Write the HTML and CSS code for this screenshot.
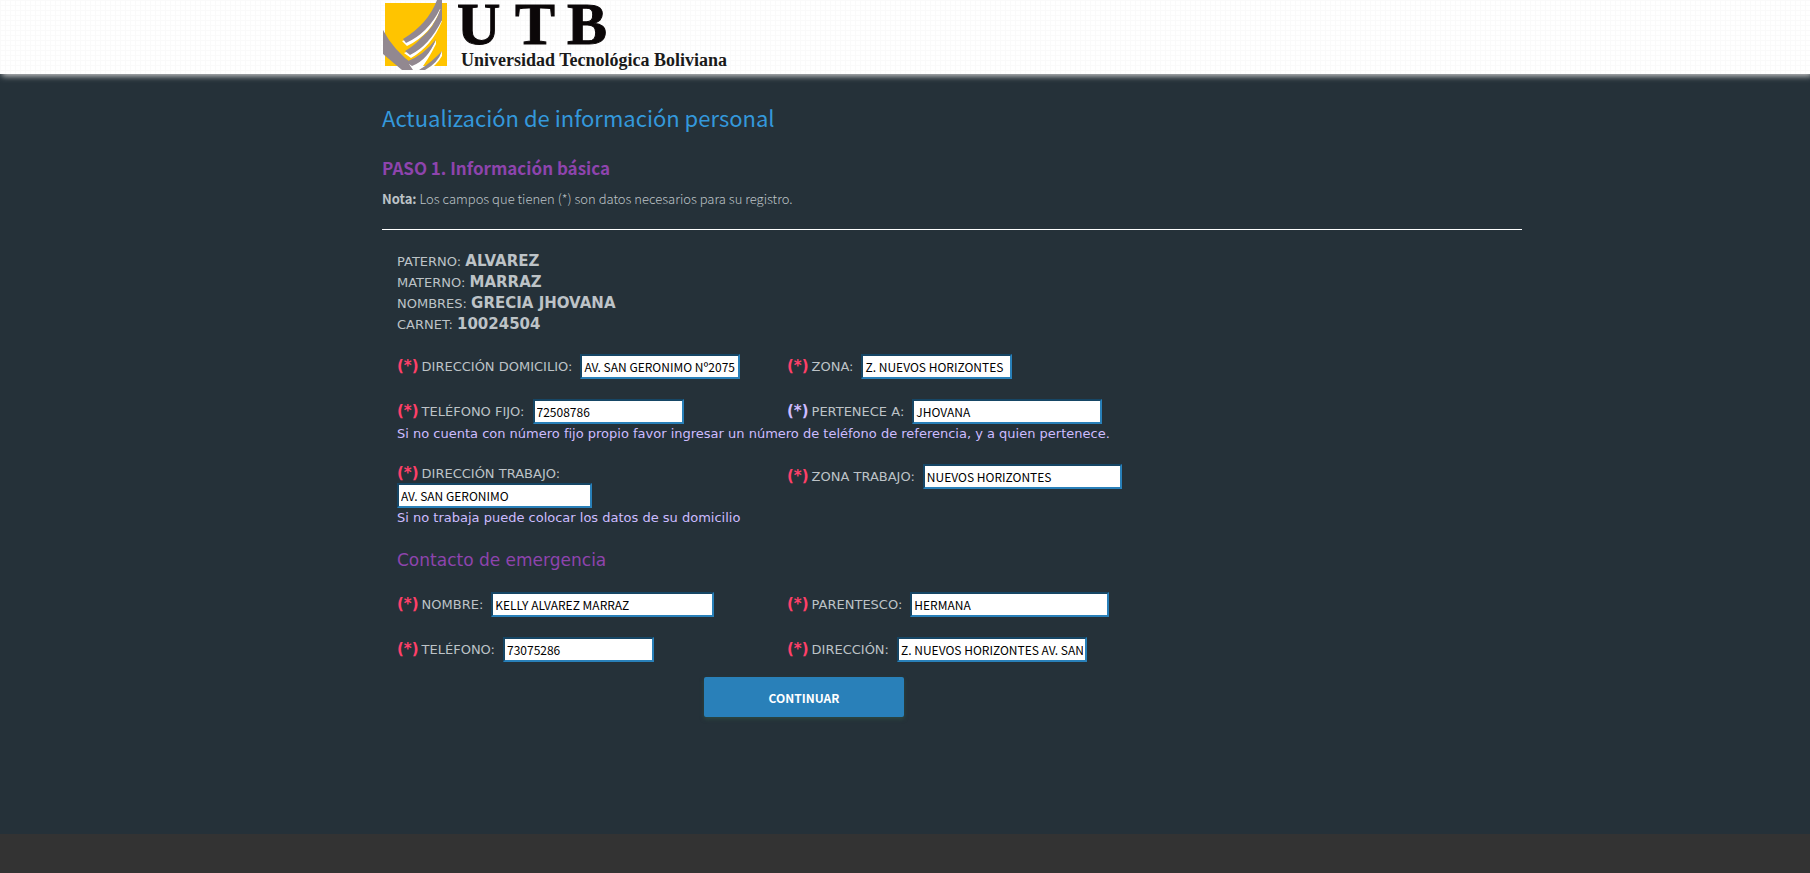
FILE: index.html
```html
<!DOCTYPE html>
<html lang="es">
<head>
    <meta charset="UTF-8">
    <meta name="viewport" content="width=device-width, initial-scale=1.0">
    <title>Actualización de información personal</title>
    <link rel="stylesheet" href="styles.css">
</head>
<body>
    <header class="header">
      <div class="container">
        <svg class="logo" width="350" height="74" viewBox="0 0 350 74" role="img" aria-label="UTB Universidad Tecnológica Boliviana">
          <rect x="3" y="3" width="62" height="63" fill="#ffc400"/>
          <path d="M1 30 Q12 51 32 65 L42 70 L20 70 L1 54 Z" fill="#928890"/>
          <path d="M31 70 L27 64 Q46 58 54 40 L54 44 Q46 60 38 70 Z" fill="#fff"/>
          <path d="M38 70 Q54 62 60 51 L60 56 Q54 66 46 70 Z" fill="#fff"/>
          <path d="M20 41 L25 46 Q50 34 59 8 L55 10 Q42 36 20 41 Z" fill="#fff"/>
          <path d="M22 53 L29 58 Q50 46 60 21 L56 20 Q44 46 22 53 Z" fill="#fff"/>
          <path d="M55 0 Q46 24 21 39 L24 43 Q46 33 58 9 L60 9 L60 0 Z" fill="#928890"/>
          <path d="M60 8 L60 20 Q47 46 28 55 L23 51 Q32 46 39 38 Q52 28 59 8 Z" fill="#928890"/>
          <path d="M54 39 Q42 55 24 62 L30 66 Q46 60 54 39 Z" fill="#928890"/>
          <path d="M60 51 Q50 62 37 70 L43 70 Q56 63 60 51 Z" fill="#928890"/>
          <text class="logo-initials" x="75 133 185" y="44">UTB</text>
          <text class="logo-name" x="79" y="66">Universidad Tecnológica Boliviana</text>
        </svg>
      </div>
    </header>

    <main class="main">
      <div class="container">
        <h1 class="page-title">Actualización de información personal</h1>
        <h2 class="step-title">PASO 1. Información básica</h2>
        <p class="intro"><strong>Nota:</strong> Los campos que tienen (*) son datos necesarios para su registro.</p>
        <hr class="divider">

        <form class="form" id="update-form">
          <!-- Student details -->
          <div class="details">
            <p>PATERNO: <b>ALVAREZ</b></p>
            <p>MATERNO: <b>MARRAZ</b></p>
            <p>NOMBRES: <b>GRECIA JHOVANA</b></p>
            <p>CARNET: <b>10024504</b></p>
          </div>

          <div class="row">
            <div class="field">
              <label for="direccion"><b class="required">(*)</b>DIRECCIÓN DOMICILIO:</label>
              <input type="text" class="w-160" id="direccion" value="AV. SAN GERONIMO Nº2075">
            </div>
            <div class="field">
              <label for="zona"><b class="required">(*)</b>ZONA:</label>
              <input type="text" class="w-150" id="zona" value="Z. NUEVOS HORIZONTES">
            </div>
          </div>

          <div class="row">
            <div class="field">
              <label for="telefono-fijo"><b class="required">(*)</b>TELÉFONO FIJO:</label>
              <input type="text" class="w-150" id="telefono-fijo" value="72508786">
            </div>
            <div class="field">
              <label for="pertenece"><b class="required optional">(*)</b>PERTENECE A:</label>
              <input type="text" class="w-190" id="pertenece" value="JHOVANA">
            </div>
            <p class="hint">Si no cuenta con número fijo propio favor ingresar un número de teléfono de referencia, y a quien pertenece.</p>
          </div>

          <div class="row">
            <div class="field stacked">
              <label for="direccion-trabajo"><b class="required">(*)</b>DIRECCIÓN TRABAJO:</label>
              <input type="text" class="w-195" id="direccion-trabajo" value="AV. SAN GERONIMO">
            </div>
            <div class="field">
              <label for="zona-trabajo"><b class="required">(*)</b>ZONA TRABAJO:</label>
              <input type="text" class="w-200" id="zona-trabajo" value="NUEVOS HORIZONTES">
            </div>
            <p class="hint">Si no trabaja puede colocar los datos de su domicilio</p>
          </div>

          <!-- Emergency contact -->
          <h3 class="section-title">Contacto de emergencia</h3>

          <div class="row">
            <div class="field">
              <label for="nombre"><b class="required">(*)</b>NOMBRE:</label>
              <input type="text" class="w-223" id="nombre" value="KELLY ALVAREZ MARRAZ">
            </div>
            <div class="field">
              <label for="parentesco"><b class="required">(*)</b>PARENTESCO:</label>
              <input type="text" class="w-200" id="parentesco" value="HERMANA">
            </div>
          </div>

          <div class="row">
            <div class="field">
              <label for="telefono"><b class="required">(*)</b>TELÉFONO:</label>
              <input type="text" class="w-150" id="telefono" value="73075286">
            </div>
            <div class="field">
              <label for="direccion-contacto"><b class="required">(*)</b>DIRECCIÓN:</label>
              <input type="text" class="w-190" id="direccion-contacto" value="Z. NUEVOS HORIZONTES AV. SAN GERONIMO">
            </div>
          </div>

          <button type="submit" class="btn">CONTINUAR</button>
        </form>
      </div>
    </main>
</body>
</html>
```

FILE: styles.css
```css
* {
  box-sizing: border-box;
  margin: 0;
  padding: 0;
}

body {
  font-family: "Noto Sans CJK SC", "Open Sans", sans-serif;
  font-size: 13px;
  color: #bdc3c7;
  background-color: #333;
}

.container {
  max-width: 1140px;
  margin-left: 382px;
  margin-right: 20px;
}

/* Header */

.header {
  position: relative;
  height: 74px;
  background-color: #fff;
  background-image:
    linear-gradient(#fafafa 1px, transparent 1px),
    linear-gradient(90deg, #fafafa 1px, transparent 1px);
  background-size: 5px 5px;
  box-shadow: 2px 2px 6px #ccc;
}

.logo {
  display: block;
  overflow: visible;
}

.logo-initials {
  font-family: "Liberation Serif", serif;
  font-size: 60px;
  font-weight: bold;
  fill: #0b0708;
  stroke: #0b0708;
  stroke-width: 1px;
}

.logo-name {
  font-family: "Liberation Serif", serif;
  font-size: 18px;
  font-weight: bold;
  fill: #1a1a1a;
}

/* Main */

.main {
  min-height: 760px;
  padding: 26px 0 40px;
  background-color: #253139;
}

.page-title {
  font-size: 22px;
  font-weight: normal;
  line-height: 34px;
  color: #3498db;
}

.step-title {
  margin-top: 21px;
  font-size: 17px;
  font-weight: bold;
  line-height: 26px;
  color: #8e44ad;
}

.intro {
  margin-top: 8px;
  font-weight: 300;
  line-height: 20px;
}

.intro strong {
  font-weight: 700;
}

.divider {
  margin-top: 20px;
  border: none;
  border-top: 1px solid #fff;
}

/* Form */

.form {
  max-width: 844px;
  padding: 21px 15px 0;
  font-family: "DejaVu Sans", Verdana, sans-serif;
}

.details {
  margin-bottom: 19px;
  line-height: 21px;
}

.details b {
  font-size: 15px;
}

.row {
  display: grid;
  grid-template-columns: 390px 1fr;
  align-items: start;
  margin-bottom: 20px;
}

.field {
  display: flex;
  align-items: center;
  gap: 8px;
}

.stacked {
  flex-direction: column;
  align-items: flex-start;
  gap: 0;
  line-height: 19px;
}

.required {
  margin-right: 3px;
  font-size: 15px;
  line-height: 15px;
  color: #ff4069;
}

.optional {
  color: #cdbcff;
}

.hint {
  grid-column: 1 / -1;
  line-height: 20px;
  color: #cdbcff;
}

.section-title {
  margin-bottom: 20px;
  font-size: 17px;
  font-weight: normal;
  line-height: 24px;
  color: #8e44ad;
}

input {
  height: 25px;
  padding: 1px 2px;
  font-family: "Noto Sans CJK SC", "Open Sans", sans-serif;
  font-size: 12px;
  color: #000;
  background-color: #fff;
  border: 2px inset #2980b9;
}

.w-150 {
  width: 151px;
}

.w-160 {
  width: 160px;
}

.w-190 {
  width: 190px;
}

.w-195 {
  width: 195px;
}

.w-200 {
  width: 199px;
}

.w-223 {
  width: 223px;
}

.btn {
  display: block;
  width: 200px;
  height: 40px;
  margin: -5px auto 0;
  font-family: "Noto Sans CJK SC", "Open Sans", sans-serif;
  font-size: 12px;
  font-weight: bold;
  color: #fff;
  background-color: #2980b9;
  border: none;
  border-radius: 2px;
  box-shadow: 0 2px 4px #2d4a41;
  cursor: pointer;
}

.btn:hover {
  background-color: #3498db;
}
```
